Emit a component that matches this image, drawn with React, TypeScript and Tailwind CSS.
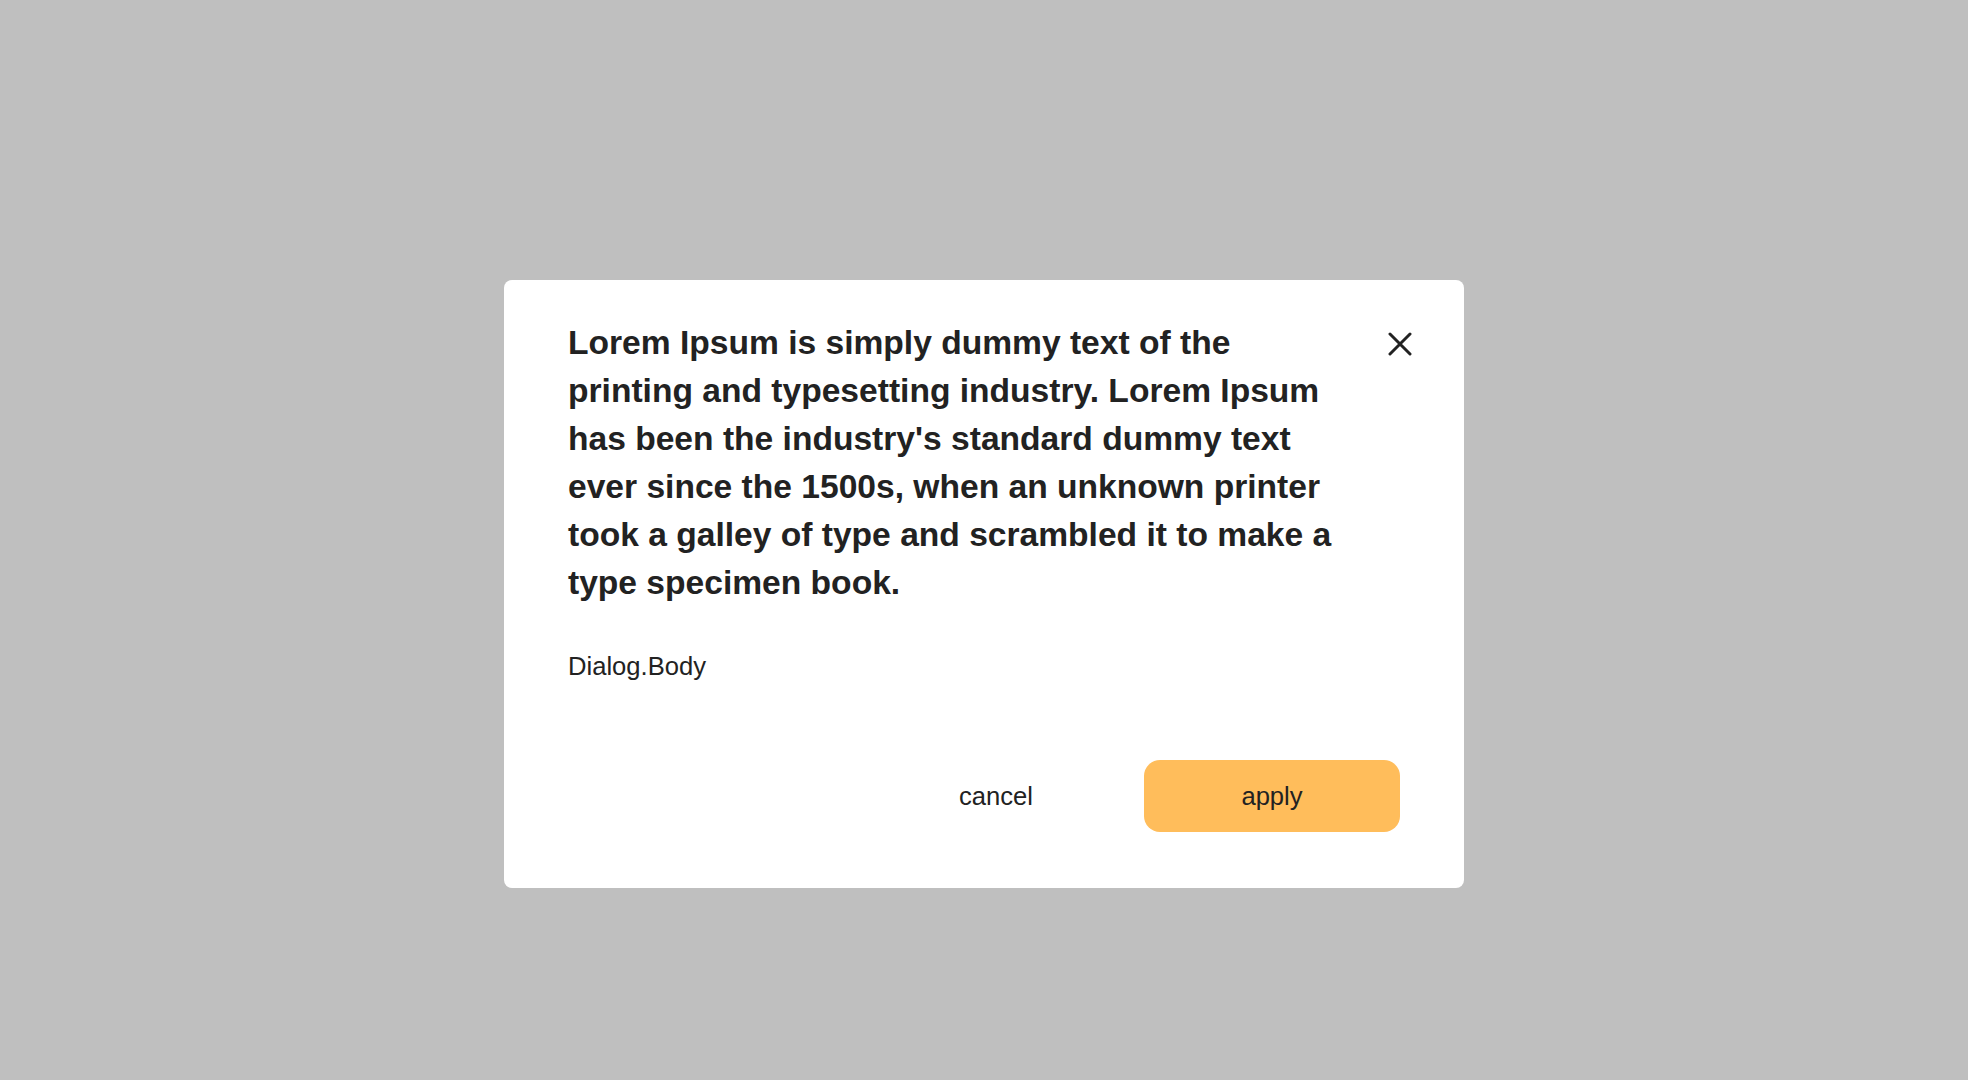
import React from "react";

function CloseIcon() {
  return (
    <svg width="24" height="24" viewBox="0 0 24 24" fill="none" aria-hidden="true">
      <path d="M2 2L22 22M22 2L2 22" stroke="#222222" strokeWidth="3" strokeLinecap="round" />
    </svg>
  );
}

export default function App() {
  return (
    <div
      className="min-h-screen w-full bg-[#bfbfbf] flex justify-center items-start pt-[280px]"
      style={{ fontFamily: '"Liberation Sans", Arial, sans-serif' }}
    >
      <div className="w-[960px] bg-white rounded-[8px] pl-[64px] pr-[52px] pt-[39px] pb-[56px] flex flex-col text-[#222222]">
        {/* Header */}
        <div className="flex items-start justify-between">
          <h2 className="flex-1 mr-[44px] text-[33.6px] leading-[48px] font-bold">
            Lorem Ipsum is simply dummy text of the printing and typesetting industry. Lorem Ipsum
            has been the industry's standard dummy text ever since the 1500s, when an unknown
            printer took a galley of type and scrambled it to make a type specimen book.
          </h2>
          <button className="mt-[13px] w-[24px] h-[24px] flex items-center justify-center" aria-label="close">
            <CloseIcon />
          </button>
        </div>

        {/* Body */}
        <p className="mt-[40px] text-[25.6px] leading-[38.4px]">Dialog.Body</p>

        {/* Footer */}
        <div className="mt-[75px] flex justify-end gap-[20px] mr-[12px]">
          <button className="w-[256px] h-[72px] rounded-[16px] text-[25.6px] text-[#222222] flex items-center justify-center">
            cancel
          </button>
          <button className="w-[256px] h-[72px] rounded-[16px] bg-[#ffbd5b] text-[25.6px] text-[#222222] flex items-center justify-center">
            apply
          </button>
        </div>
      </div>
    </div>
  );
}
